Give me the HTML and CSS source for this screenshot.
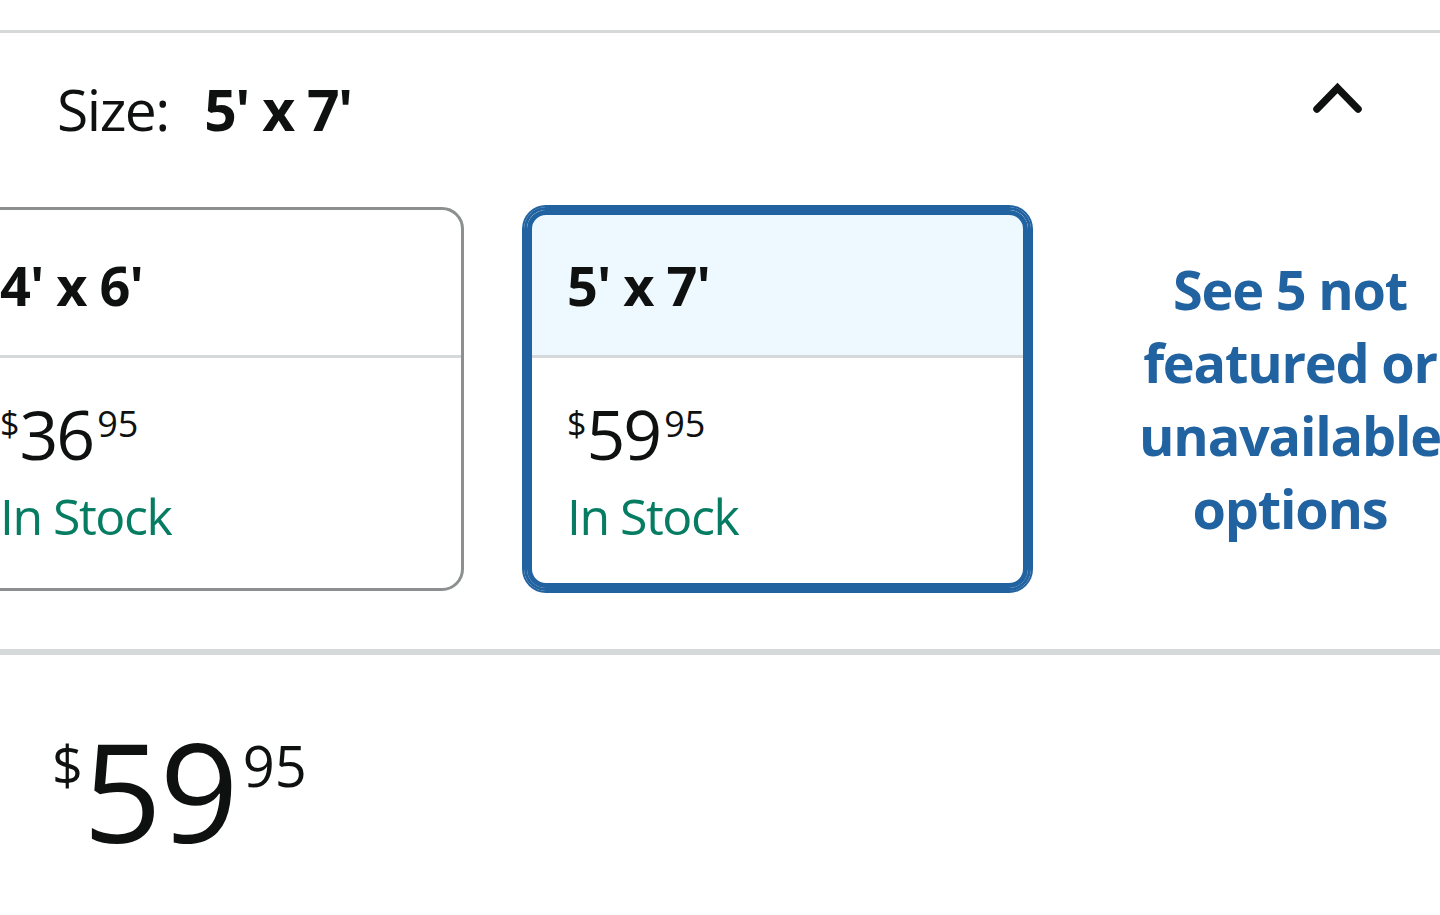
FILE: index.html
```html
<!DOCTYPE html>
<html lang="en">
<head>
<meta charset="utf-8">
<title>Size selector</title>
<link rel="stylesheet" href="styles.css">
</head>
<body>
<div class="page">
  <div class="rule-top"></div>
  <section class="twister">
    <div class="twister-header">
      <div class="twister-label">
        <span class="label-key">Size:</span>
        <span class="label-value">5' x 7'</span>
      </div>
      <svg class="chevron" width="58" height="40" viewBox="0 0 58 40" aria-hidden="true">
        <polyline points="8,31 28.5,10 49,31" fill="none" stroke="#0f1111" stroke-width="7.5" stroke-linecap="round" stroke-linejoin="miter"/>
      </svg>
    </div>
    <div class="swatch-row">
      <div class="swatch">
        <div class="swatch-head"><span class="swatch-title">4' x 6'</span></div>
        <div class="swatch-body">
          <div class="price price-small"><span class="sym">$</span><span class="whole">36</span><span class="frac">95</span></div>
          <div class="stock">In Stock</div>
        </div>
      </div>
      <div class="swatch selected">
        <div class="swatch-head"><span class="swatch-title">5' x 7'</span></div>
        <div class="swatch-body">
          <div class="price price-small"><span class="sym">$</span><span class="whole">59</span><span class="frac">95</span></div>
          <div class="stock">In Stock</div>
        </div>
      </div>
      <div class="more-options">
        <a class="more-link" href="#">See 5 not featured or unavailable options</a>
      </div>
    </div>
  </section>
  <div class="rule-thick"></div>
  <div class="price-block">
    <div class="price price-big"><span class="sym">$</span><span class="whole">59</span><span class="frac">95</span></div>
  </div>
</div>
</body>
</html>
```

FILE: styles.css
```css
html, body {
  margin: 0;
  padding: 0;
  background: #ffffff;
}
body {
  width: 1440px;
  height: 915px;
  overflow: hidden;
  font-family: "Open Sans", "Noto Sans", sans-serif;
  color: #0f1111;
}
.page {
  width: 1440px;
}
.rule-top {
  margin-top: 30px;
  height: 3px;
  background: #d5d9d9;
}
.twister-header {
  display: flex;
  align-items: center;
  justify-content: space-between;
  padding: 0 73px 0 57px;
  height: 160px;
}
.twister-label {
  font-size: 57px;
  line-height: 1;
  letter-spacing: -1.5px;
  margin-top: -8px;
}
.label-key {
  font-weight: 400;
  margin-right: 22px;
}
.label-value {
  font-weight: 700;
}
.chevron {
  display: block;
  margin-top: -30px;
}
.swatch-row {
  display: flex;
  gap: 60px;
  margin-left: -43px;
  margin-top: 14px;
}
.swatch {
  position: relative;
  flex: 0 0 auto;
  width: 507px;
  height: 384px;
  box-sizing: border-box;
  border: 3px solid #8d9090;
  border-radius: 22px;
  overflow: hidden;
  display: flex;
  flex-direction: column;
}
.swatch.selected {
  border-color: #2162a1;
  box-shadow: 0 0 0 2px #2162a1;
  overflow: visible;
}
.swatch.selected::after {
  content: "";
  position: absolute;
  inset: 0;
  border: 5px solid #2162a1;
  border-radius: 19px;
  pointer-events: none;
}
.swatch-head {
  height: 148px;
  box-sizing: border-box;
  border-bottom: 3px solid #d5d9d9;
  display: flex;
  align-items: center;
  padding: 0 40px;
}
.selected .swatch-head {
  background: #edf8ff;
  border-radius: 19px 19px 0 0;
}
.swatch-title {
  font-size: 54px;
  font-weight: 700;
  letter-spacing: -1px;
  margin-top: 4px;
}
.swatch-body {
  padding: 42px 40px 0;
}
.price {
  display: flex;
  align-items: flex-start;
  line-height: 1;
}
.price-small .sym {
  font-size: 34px;
  margin-top: 6px;
}
.price-small .whole {
  font-size: 68px;
  letter-spacing: -2px;
}
.price-small .frac {
  font-size: 36px;
  margin-top: 6px;
  margin-left: 4px;
}
.stock {
  font-size: 50px;
  color: #067d62;
  letter-spacing: -1.5px;
  margin-top: 18px;
  line-height: 1.2;
}
.more-options {
  flex: 0 0 398px;
  display: flex;
  align-items: center;
  justify-content: center;
  text-align: center;
}
.more-link {
  font-size: 54px;
  font-weight: 700;
  line-height: 73px;
  color: #2162a1;
  text-decoration: none;
  letter-spacing: -1.2px;
}
.rule-thick {
  margin-top: 58px;
  height: 6px;
  background: #d5d9d9;
}
.price-block {
  padding: 76px 0 0 52px;
}
.price-big .sym {
  font-size: 54px;
  margin-top: 6px;
}
.price-big .whole {
  font-size: 138px;
  letter-spacing: -2px;
  margin-top: -11px;
}
.price-big .frac {
  font-size: 56px;
  margin-top: 6px;
  margin-left: 6px;
}
```
